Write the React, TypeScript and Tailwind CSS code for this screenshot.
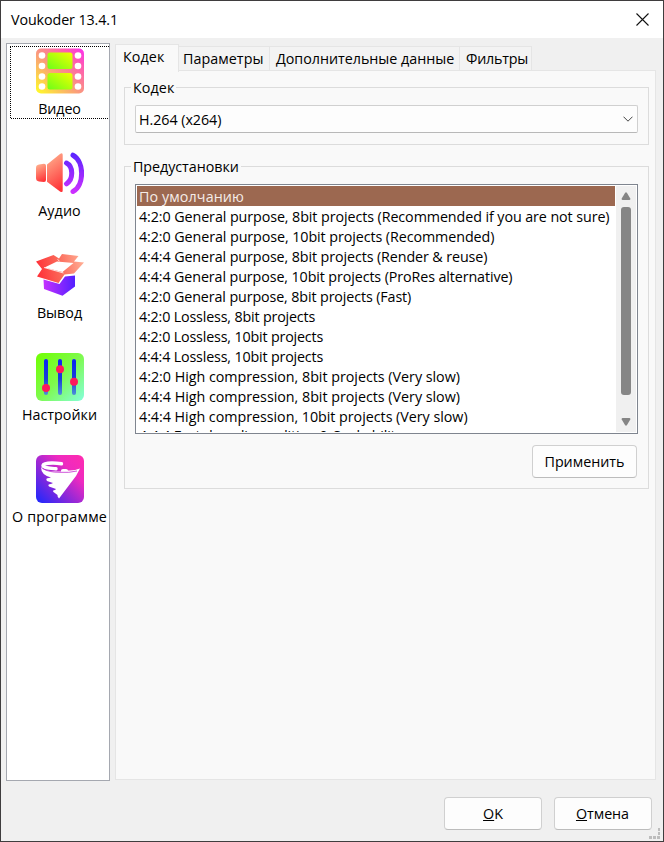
import type { ReactNode } from 'react';

const presets = [
  { text: 'По умолчанию', tracking: 'leading-[22px] tracking-[0.1px]' },
  { text: '4:2:0 General purpose, 8bit projects (Recommended if you are not sure)', tracking: 'leading-[22px] tracking-[-0.085px]' },
  { text: '4:2:0 General purpose, 10bit projects (Recommended)', tracking: 'leading-[22px] tracking-[-0.08px]' },
  { text: '4:4:4 General purpose, 8bit projects (Render & reuse)', tracking: 'leading-[22px] tracking-[-0.1px]' },
  { text: '4:4:4 General purpose, 10bit projects (ProRes alternative)', tracking: 'leading-[22px] tracking-[-0.11px]' },
  { text: '4:2:0 General purpose, 8bit projects (Fast)', tracking: 'leading-[22px] tracking-[-0.12px]' },
  { text: '4:2:0 Lossless, 8bit projects', tracking: 'leading-[22px] tracking-[-0.17px]' },
  { text: '4:2:0 Lossless, 10bit projects', tracking: 'leading-[22px] tracking-[-0.17px]' },
  { text: '4:4:4 Lossless, 10bit projects', tracking: 'leading-[22px] tracking-[-0.17px]' },
  { text: '4:2:0 High compression, 8bit projects (Very slow)', tracking: 'leading-[22px] tracking-[-0.02px]' },
  { text: '4:4:4 High compression, 8bit projects (Very slow)', tracking: 'leading-[22px] tracking-[-0.02px]' },
  { text: '4:4:4 High compression, 10bit projects (Very slow)', tracking: 'leading-[22px] tracking-[-0.03px]' },
  { text: '4:4:4 Fast decoding, editing & Seekability', tracking: 'leading-[20px] tracking-[-0.15px]' },
];

function VideoIcon() {
  return (
    <svg width="48" height="48" viewBox="0 0 48 48">
      <defs>
        <linearGradient id="v1" x1="0" y1="1" x2="1" y2="0">
          <stop offset="0" stopColor="#ffff25" />
          <stop offset="0.5" stopColor="#fa9284" />
          <stop offset="0.8" stopColor="#ff58b5" />
          <stop offset="1" stopColor="#fb2df0" />
        </linearGradient>
        <linearGradient id="v2" x1="0" y1="1" x2="1" y2="0">
          <stop offset="0" stopColor="#6cff18" />
          <stop offset="1" stopColor="#f2ff00" />
        </linearGradient>
      </defs>
      <rect y="0.5" width="48" height="45" rx="5" fill="url(#v1)" />
      {[7.5, 18, 28.5, 38.5].map((y) => (
        <g key={y} fill="#fff">
          <circle cx="6" cy={y} r="3.3" />
          <circle cx="42" cy={y} r="3.3" />
        </g>
      ))}
      <rect x="11.5" y="4.5" width="25" height="16.5" rx="2.5" fill="url(#v2)" />
      <rect x="11.5" y="25" width="25" height="16.5" rx="2.5" fill="url(#v2)" />
    </svg>
  );
}

function AudioIcon() {
  return (
    <svg width="48" height="48" viewBox="0 0 48 48">
      <defs>
        <linearGradient id="a1" x1="0.3" y1="0" x2="0.6" y2="1">
          <stop offset="0" stopColor="#ffad8c" />
          <stop offset="1" stopColor="#ff3438" />
        </linearGradient>
        <linearGradient id="a2" x1="0" y1="3" x2="0" y2="43" gradientUnits="userSpaceOnUse">
          <stop offset="0" stopColor="#5a25ff" />
          <stop offset="1" stopColor="#cf30ff" />
        </linearGradient>
      </defs>
      <g transform="translate(0 0.5)">
        <path d="M3 14 L8 13.3 Q10 13.3 10 15.3 V29.5 Q10 31.5 8 31.5 L3 31 Q0 30.5 0 27.5 V17 Q0 14.5 3 14Z" fill="url(#a1)" />
        <path d="M11 14 L24 3.5 Q26.7 1.8 26.7 4.5 V40 Q26.7 42.5 24 41 L11 31.3Z" fill="url(#a1)" />
        <path d="M30.5 12.5 C37.5 16 37.5 29 30.5 33.3 M37 4.7 C48.5 11 48.5 35 37 41" fill="none" stroke="url(#a2)" strokeWidth="5" strokeLinecap="round" />
      </g>
    </svg>
  );
}

function OutputIcon() {
  return (
    <svg width="48" height="48" viewBox="0 0 48 48">
      <defs>
        <linearGradient id="o1" x1="1" y1="20" x2="45" y2="10" gradientUnits="userSpaceOnUse">
          <stop offset="0" stopColor="#ff3038" />
          <stop offset="0.5" stopColor="#fb6758" />
          <stop offset="1" stopColor="#ffa88f" />
        </linearGradient>
        <linearGradient id="o2">
          <stop offset="0" stopColor="#c530ff" />
          <stop offset="1" stopColor="#5320ff" />
        </linearGradient>
      </defs>
      <path d="M7.5 27.5 L23.5 32 L29 24.5 L39 23.5 V34.5 L26.5 43.7 L8 37Z" fill="url(#o2)" />
      <path fillRule="evenodd" d="M0 9.5 L17.5 3 L23 6.5 L26 2 L42.5 4 L38 9.5 L48 10.5 L38 21.5 L28.5 22.5 L22.5 31 L1 24.5 L6 17Z M8.5 15.5 L26.5 20 L37.5 11 L21 9.5Z" fill="url(#o1)" />
      <path d="M8 15.5 L27.5 21 M21.5 7.5 L23.5 9" stroke="#fff" strokeWidth="0.8" />
    </svg>
  );
}

function SettingsIcon() {
  return (
    <svg className="-mt-px mb-1" width="48" height="48" viewBox="0 0 48 48">
      <defs>
        <linearGradient id="s1" x1="0" y1="0" x2="1" y2="1">
          <stop offset="0" stopColor="#70ff00" />
          <stop offset="0.5" stopColor="#7efa4c" />
          <stop offset="1" stopColor="#85ffdc" />
        </linearGradient>
        <linearGradient id="s2" x1="0" y1="6" x2="0" y2="42" gradientUnits="userSpaceOnUse">
          <stop offset="0" stopColor="#0825f5" />
          <stop offset="0.55" stopColor="#183ed8" />
          <stop offset="1" stopColor="#4e8fd7" />
        </linearGradient>
      </defs>
      <rect width="48" height="48" rx="6" fill="url(#s1)" />
      {[8, 22, 36].map((x) => (
        <rect key={x} x={x} y="6" width="4" height="36" rx="2" fill="url(#s2)" />
      ))}
      <g fill="#ff175c">
        <circle cx="10" cy="35" r="4" />
        <circle cx="24" cy="16.3" r="4" />
        <circle cx="38" cy="28.7" r="4" />
      </g>
    </svg>
  );
}

function AboutIcon() {
  return (
    <svg className="-mt-px mb-1" width="48" height="48" viewBox="0 0 48 48">
      <defs>
        <linearGradient id="p1" x1="0" y1="1" x2="1" y2="0">
          <stop offset="0" stopColor="#1828ff" />
          <stop offset="0.4" stopColor="#9028d8" />
          <stop offset="0.7" stopColor="#ee2ac0" />
          <stop offset="1" stopColor="#ff2cae" />
        </linearGradient>
      </defs>
      <rect width="48" height="48" rx="6" fill="url(#p1)" />
      <path d="M25.5 8.7 C15 7.5 7.5 8.5 7 10.5 C7 12.7 12 13 20 13.8" fill="none" stroke="#fff" strokeWidth="3.4" strokeLinecap="round" />
      <path d="M25 15.5 Q25 14 27 14 H30 Q32 14 32 15.5 Q38 16 44 13.5 L40 21 L23 43.5 Q21 41 21.5 40 L17.5 37 Q16 35.5 19 35 L20 34 L13 31.5 Q11 29 15 29 L17 28 L11 26 Q9 23 13 23 L15 22.5 Q5 20 5 12 Q8 17 25 16.5Z" fill="#fff" />
      <path d="M6.5 13.5 Q13 17.5 24 17.3 Q33 18 41 16" fill="none" stroke="#c32ccf" strokeWidth="0.8" />
    </svg>
  );
}

function NavItem({ label, tracking, active, children }: { label: string; tracking: string; active?: boolean; children: ReactNode }) {
  return (
    <div className="relative h-[102px] w-[103px] shrink-0 pl-[29px] pt-1">
      {active && (
        <svg className="absolute left-[3px] top-[2px]" width="99" height="73" fill="none" stroke="#000" strokeDasharray="1 1">
          <path d="M99 0.5 H0 M0.5 1 V73 M1 72.5 H99" />
        </svg>
      )}
      {children}
      <div className={`-ml-[29px] mt-[3px] h-5 w-[105px] whitespace-nowrap text-center leading-5 ${tracking}`}>{label}</div>
    </div>
  );
}

function Group({ title, className, tracking, children }: { title: string; className: string; tracking: string; children: ReactNode }) {
  return (
    <section className={`border border-[#dcdcdc] px-[10px] ${className}`}>
      <div className="-mt-[11px] mb-2 flex h-5">
        <span className={`-ml-[4px] h-5 bg-[#f9f9f9] px-[2px] leading-[22px] ${tracking}`}>{title}</span>
      </div>
      {children}
    </section>
  );
}

function Button({ className, children }: { className: string; children: ReactNode }) {
  return (
    <button className={`flex h-[33px] items-center justify-center rounded-[4px] border border-[#d0d0d0] border-b-[#bcbcbc] bg-[#fdfdfd] ${className}`}>
      {children}
    </button>
  );
}

export default function App() {
  return (
    <div className="flex h-[842px] w-[664px] flex-col overflow-hidden border border-[#3f3d3e] bg-[#f0f0f0] font-['Open_Sans','Noto_Sans',sans-serif] text-[14.3px] text-black">
      <header className="flex h-[37px] shrink-0 items-center justify-between bg-white pl-[10px] pr-[14px]">
        <span className="tracking-[-0.1px]">Voukoder 13.4.1</span>
        <svg width="13" height="13" viewBox="0 0 13 13" stroke="#111" strokeWidth="1.1">
          <path d="M0.5 0.5 L12.5 12.5 M12.5 0.5 L0.5 12.5" />
        </svg>
      </header>

      <main className="flex h-[743px] shrink-0 pl-[5px] pt-[5px]">
        <nav className="flex h-[738px] w-[104px] shrink-0 flex-col overflow-hidden border border-[#a5a8b0] bg-white">
          <NavItem label="Видео" tracking="tracking-[-0.1px]" active><VideoIcon /></NavItem>
          <NavItem label="Аудио" tracking="tracking-[0.1px]"><AudioIcon /></NavItem>
          <NavItem label="Вывод" tracking="tracking-[0px]"><OutputIcon /></NavItem>
          <NavItem label="Настройки" tracking="tracking-[0px]"><SettingsIcon /></NavItem>
          <NavItem label="О программе" tracking="tracking-[0.2px]"><AboutIcon /></NavItem>
        </nav>

        <div className="ml-[5px] flex h-[737px] w-[541px] flex-col">
          <div className="flex h-7 shrink-0 items-end">
            <div className="z-10 -mb-px h-7 w-16 border border-b-0 border-[#e5e5e5] bg-[#f9f9f9] pl-[7px] leading-[24px] tracking-[0.1px]">Кодек</div>
            <div className="h-[25px] w-[91px] border-r border-t border-[#e5e5e5] bg-[#f3f3f3] pl-1 leading-[24px] tracking-[0.05px]">Параметры</div>
            <div className="h-[25px] w-[190px] whitespace-nowrap border-r border-t border-[#e5e5e5] bg-[#f3f3f3] pl-[6px] leading-[24px] tracking-[-0.02px]">Дополнительные данные</div>
            <div className="h-[25px] w-[72px] border-r border-t border-[#e5e5e5] bg-[#f3f3f3] pl-[6px] leading-[24px] tracking-[-0.2px]">Фильтры</div>
          </div>
          <div className="-mt-px h-[710px] border border-[#e5e5e5] bg-[#f9f9f9] pl-2 pt-4">
            <Group title="Кодек" tracking="tracking-[0.1px]" className="h-[58px] w-[525px]">
              <div className="flex h-7 w-[503px] items-center justify-between rounded-[2px] border border-[#d0d0d0] border-b-[#b8b8b8] bg-[#fdfdfd] pl-[3px] pr-[4px]">
                <span className="pt-px tracking-[-0.05px]">H.264 (x264)</span>
                <svg width="10" height="6" viewBox="0 0 10 6" fill="none" stroke="#444" strokeWidth="1"><path d="M0.5 0.7 L5 5.2 L9.5 0.7" /></svg>
              </div>
            </Group>
            <Group title="Предустановки" tracking="tracking-[-0.05px]" className="mt-[21px] h-[323px] w-[525px]">
              <div className="flex h-[250px] w-[503px] border border-[#7f858f] bg-white p-px">
                <ul className="h-[246px] w-[478px] overflow-hidden whitespace-nowrap">
                  {presets.map((p, i) => (
                    <li key={p.text} className={`h-5 pl-[2px] ${p.tracking} ${i === 0 ? 'bg-[#9c6850] text-[#f5ece8]' : ''}`}>{p.text}</li>
                  ))}
                </ul>
                <div className="ml-px flex h-[246px] w-5 flex-col items-center bg-[#f0f0f0] pt-[6px]">
                  <svg width="10" height="8" fill="#858585"><path d="M4 1 Q5 -0.5 6 1 L9.3 6.5 Q9.7 8 8.3 8 H1.7 Q0.3 8 0.7 6.5Z" /></svg>
                  <div className="mt-[7px] h-[188px] w-[10px] rounded-[3px] bg-[#868686]" />
                  <svg className="mt-[23px]" width="10" height="8" fill="#858585"><path d="M4 7 Q5 8.5 6 7 L9.3 1.5 Q9.7 0 8.3 0 H1.7 Q0.3 0 0.7 1.5Z" /></svg>
                </div>
              </div>
              <Button className="ml-[397px] mt-[11px] w-[105px]"><span>Применить</span></Button>
            </Group>
          </div>
        </div>
      </main>

      <footer className="relative flex h-[60px] justify-end gap-3 pr-[11px] pt-4">
        <Button className="w-[98px]"><span><u>O</u>K</span></Button>
        <Button className="w-[98px]"><span className="-ml-px tracking-[-0.05px]"><u>О</u>тмена</span></Button>
        <svg className="absolute bottom-[2px] right-[3px]" width="11" height="11" fill="#bdbdbd">
          <path d="M9 0h2v3h-2z M9 4h2v3h-2z M4 8h3v3h-3z M0 8h3v3h-3z M8 8h3v3h-3z" />
        </svg>
      </footer>
    </div>
  );
}
